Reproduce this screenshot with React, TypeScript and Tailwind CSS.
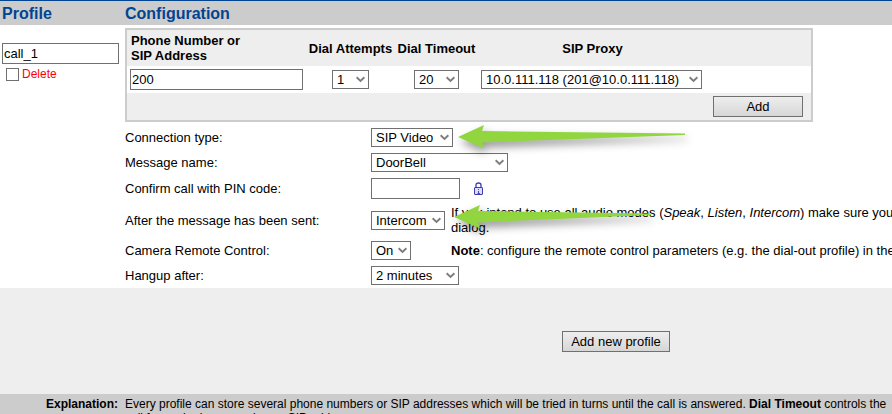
import type { ReactNode } from "react";

const chevron = (
  <svg
    className="pointer-events-none absolute right-[4px] top-[6px]"
    width="9"
    height="7"
    viewBox="0 0 9 7"
    fill="none"
    stroke="#7c7c7c"
    strokeWidth="1.9"
    aria-hidden="true"
  >
    <path d="M0.6 1.3 L4.5 5 L8.4 1.3" />
  </svg>
);

function Select({ id, label, width, options }: { id: string; label?: string; width: string; options: string[] }) {
  return (
    <span className={`relative inline-block ${width}`}>
      <select
        id={id}
        aria-label={label}
        className="block h-[19px] w-full appearance-none border border-[#707070] bg-white pl-1 text-[13px] leading-[17px] text-black"
      >
        {options.map((o) => (
          <option key={o}>{o}</option>
        ))}
      </select>
      {chevron}
    </span>
  );
}

function Row({ id, label, height, children, note }: { id: string; label: string; height: string; children: ReactNode; note?: ReactNode }) {
  return (
    <div className={`flex items-center whitespace-nowrap ${height}`}>
      <label htmlFor={id} className="w-[246px] shrink-0">
        {label}
      </label>
      {note ? <div className="flex w-20 shrink-0">{children}</div> : children}
      {note && <div className="min-w-0">{note}</div>}
    </div>
  );
}

function Arrow({ className, length }: { className: string; length: number }) {
  return (
    <svg
      className={`pointer-events-none absolute overflow-visible drop-shadow-[2px_5px_4px_rgba(0,0,0,0.4)] ${className}`}
      width={length}
      height="24"
      viewBox={`0 0 ${length} 24`}
      fill="#92d63f"
      aria-hidden="true"
    >
      <path d={`M0 12 L26 0 L24 6 L${length} 8.5 L${length} 10 L24 17.5 L26 23.5 Z`} />
    </svg>
  );
}

function PadLock() {
  return (
    <svg className="ml-[14px]" width="9" height="14" viewBox="0 0 9 14" fill="none" stroke="#3c3cb4" aria-hidden="true">
      <path d="M2 6 V3 Q2 1 4.5 1 Q7 1 7 3 V6" strokeWidth="1.3" />
      <rect x="0.5" y="5.5" width="8" height="7" rx="0.5" fill="#dcdcf8" />
      <path d="M4 7.5 H5 M4 9.5 H5 M4.5 9 V11 M3.5 11.5 H6" strokeWidth="0.9" />
    </svg>
  );
}

const inputStyle = "h-[21px] border border-[#707070] bg-white px-px text-[13px] leading-[19px] text-black";
const buttonStyle = "h-[21px] border border-[#707070] bg-linear-to-b from-[#eeeeee] to-[#d6d6d6] text-[13px] leading-[19px]";

export default function App() {
  return (
    <div className="overflow-hidden bg-white font-['Liberation_Sans',Arial,sans-serif] text-[13px] leading-[15px] text-black">
      <header className="flex h-[25px] items-center border-t border-[#004494] bg-[#cccccc] text-[16px] font-bold text-[#004494]">
        <h2 className="w-[125px] shrink-0 pl-[2px]">Profile</h2>
        <h2>Configuration</h2>
      </header>

      <main className="flex">
        <section className="w-[125px] shrink-0 pl-[2px] pt-[18px]">
          <input aria-label="Profile name" defaultValue="call_1" className={`block w-[117px] ${inputStyle}`} />
          <label className="mt-[3px] flex items-center gap-[3px] pl-1 text-[12px] text-[#ff0000]">
            <input type="checkbox" className="size-[13px] appearance-none border border-[#707070] bg-white" />
            Delete
          </label>
        </section>

        <section className="relative min-w-0 flex-1 pt-[3px]">
          <table className="w-[688px] table-fixed border-collapse border-2 border-[#cccccc]">
            <colgroup>
              <col className="w-[180px]" />
              <col className="w-[89px]" />
              <col className="w-[83px]" />
              <col />
            </colgroup>
            <thead className="bg-[#eeeeee]">
              <tr className="h-[37px]">
                <th className="pl-[4px] text-left">
                  Phone Number or
                  <br />
                  SIP Address
                </th>
                <th className="whitespace-nowrap">Dial Attempts</th>
                <th className="whitespace-nowrap">Dial Timeout</th>
                <th className="pr-[104px]">SIP Proxy</th>
              </tr>
            </thead>
            <tbody>
              <tr className="h-[27px]">
                <td className="pl-[3px]">
                  <input aria-label="Phone number or SIP address" defaultValue="200" className={`block w-[173px] ${inputStyle}`} />
                </td>
                <td>
                  <div className="flex justify-center">
                    <Select id="attempts" label="Dial attempts" width="w-[37px]" options={["1"]} />
                  </div>
                </td>
                <td>
                  <div className="flex justify-center">
                    <Select id="timeout" label="Dial timeout" width="w-[45px]" options={["20"]} />
                  </div>
                </td>
                <td>
                  <div className="flex pl-[3px]">
                    <Select id="proxy" label="SIP proxy" width="w-[221px]" options={["10.0.111.118 (201@10.0.111.118)"]} />
                  </div>
                </td>
              </tr>
            </tbody>
            <tfoot className="bg-[#eeeeee]">
              <tr className="h-[28px]">
                <td colSpan={4}>
                  <div className="flex justify-end pr-[8px]">
                    <button type="button" className={`w-[90px] ${buttonStyle}`}>
                      Add
                    </button>
                  </div>
                </td>
              </tr>
            </tfoot>
          </table>

          <form className="pt-[3px]">
            <Row id="type" label="Connection type:" height="h-[25px]">
              <Select id="type" width="w-[82px]" options={["SIP Video"]} />
            </Row>
            <Row id="message" label="Message name:" height="h-[25px]">
              <Select id="message" width="w-[137px]" options={["DoorBell"]} />
            </Row>
            <Row id="pin" label="Confirm call with PIN code:" height="h-[27px]">
              <input id="pin" className={`w-[89px] ${inputStyle}`} />
              <PadLock />
            </Row>
            <Row
              id="after"
              label="After the message has been sent:"
              height="h-[36px]"
              note={
                <>
                  If you intend to use all audio modes (<i>Speak</i>, <i>Listen</i>, <i>Intercom</i>) make sure you h
                  <br />
                  dialog.
                </>
              }
            >
              <Select id="after" width="w-[74px]" options={["Intercom"]} />
            </Row>
            <Row
              id="camera"
              label="Camera Remote Control:"
              height="h-[25px]"
              note={
                <>
                  <b>Note</b>: configure the remote control parameters (e.g. the dial-out profile) in the
                </>
              }
            >
              <Select id="camera" width="w-[40px]" options={["On"]} />
            </Row>
            <Row id="hangup" label="Hangup after:" height="h-[25px]">
              <Select id="hangup" width="w-[88px]" options={["2 minutes"]} />
            </Row>
          </form>
          <Arrow className="left-[333px] top-[100px]" length={227} />
          <Arrow className="left-[329px] top-[180px]" length={197} />
        </section>
      </main>

      <div className="flex h-[106px] items-center justify-center bg-[#eeeeee] pl-[340px]">
        <button type="button" className={`w-[108px] ${buttonStyle}`}>
          Add new profile
        </button>
      </div>

      <footer className="flex h-5 gap-[7px] overflow-hidden whitespace-nowrap bg-[#cccccc] pt-[3px] text-[12px] leading-[14px]">
        <b className="w-[118px] shrink-0 text-right">Explanation:</b>
        <p>
          Every profile can store several phone numbers or SIP addresses which will be tried in turns until the call is answered.{" "}
          <b>Dial Timeout</b> controls the
          <br />
          call for each phone number or SIP address.
        </p>
      </footer>
    </div>
  );
}
